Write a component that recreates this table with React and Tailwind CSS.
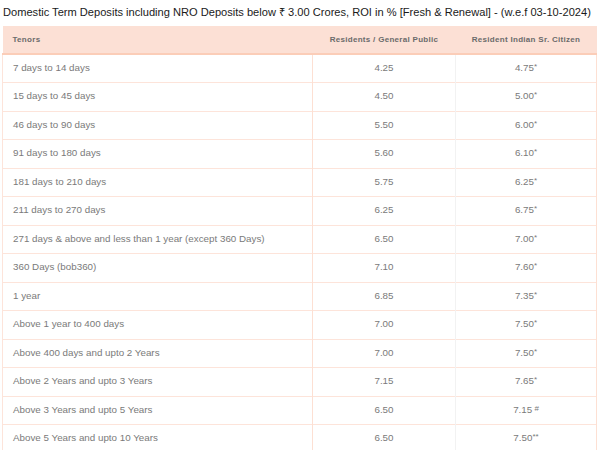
const rows = [
  ["7 days to 14 days", "4.25", "4.75*"],
  ["15 days to 45 days", "4.50", "5.00*"],
  ["46 days to 90 days", "5.50", "6.00*"],
  ["91 days to 180 days", "5.60", "6.10*"],
  ["181 days to 210 days", "5.75", "6.25*"],
  ["211 days to 270 days", "6.25", "6.75*"],
  ["271 days & above and less than 1 year (except 360 Days)", "6.50", "7.00*"],
  ["360 Days (bob360)", "7.10", "7.60*"],
  ["1 year", "6.85", "7.35*"],
  ["Above 1 year to 400 days", "7.00", "7.50*"],
  ["Above 400 days and upto 2 Years", "7.00", "7.50*"],
  ["Above 2 Years and upto 3 Years", "7.15", "7.65*"],
  ["Above 3 Years and upto 5 Years", "6.50", "7.15 #"],
  ["Above 5 Years and upto 10 Years", "6.50", "7.50**"],
];

function Rate({ value }) {
  const m = value.match(/^([\d.]+)(.*)$/);
  const mark = m[2];
  return (
    <span>
      {m[1]}
      {mark && (
        <span className="relative -top-[2px] text-[8px]">
          {mark.trim() === "#" ? "\u00a0#" : mark}
        </span>
      )}
    </span>
  );
}

export default function App() {
  return (
    <div className="w-[600px] h-[450px] overflow-hidden bg-white font-['Liberation_Sans',Arial,sans-serif]">
      <div className="pl-[3px] pt-[4px] h-[26px] text-[11.1px] text-[#1a1a1a] leading-[16px] whitespace-nowrap">
        Domestic Term Deposits including NRO Deposits below ₹ 3.00 Crores, ROI in % [Fresh &amp; Renewal] - (w.e.f 03-10-2024)
      </div>
      <table className="ml-[2px] w-[594px] border-collapse table-fixed">
        <colgroup>
          <col className="w-[310px]" />
          <col className="w-[143px]" />
          <col className="w-[141px]" />
        </colgroup>
        <thead>
          <tr className="h-[28px] bg-[#fce0d5] border-b-2 border-[#fbcdb8] text-[8px] font-bold text-[#6b6b6b] tracking-[0.3px]">
            <th className="text-left pl-[10px] font-bold">Tenors</th>
            <th className="text-center font-bold">Residents / General Public</th>
            <th className="text-center font-bold">Resident Indian Sr. Citizen</th>
          </tr>
        </thead>
        <tbody className="text-[9.8px] text-[#7a7a7a]">
          {rows.map((r, i) => (
            <tr key={i} className="h-[28.5px] border-b border-[#fde4da]">
              <td className="pl-[10px] border-l border-[#fde4da] whitespace-nowrap">{r[0]}</td>
              <td className="text-center border-l border-[#fde0d3]">{r[1]}</td>
              <td className="text-center border-l border-r border-l-[#f2f2f2] border-r-[#fde0d3]">
                <Rate value={r[2]} />
              </td>
            </tr>
          ))}
        </tbody>
      </table>
    </div>
  );
}
